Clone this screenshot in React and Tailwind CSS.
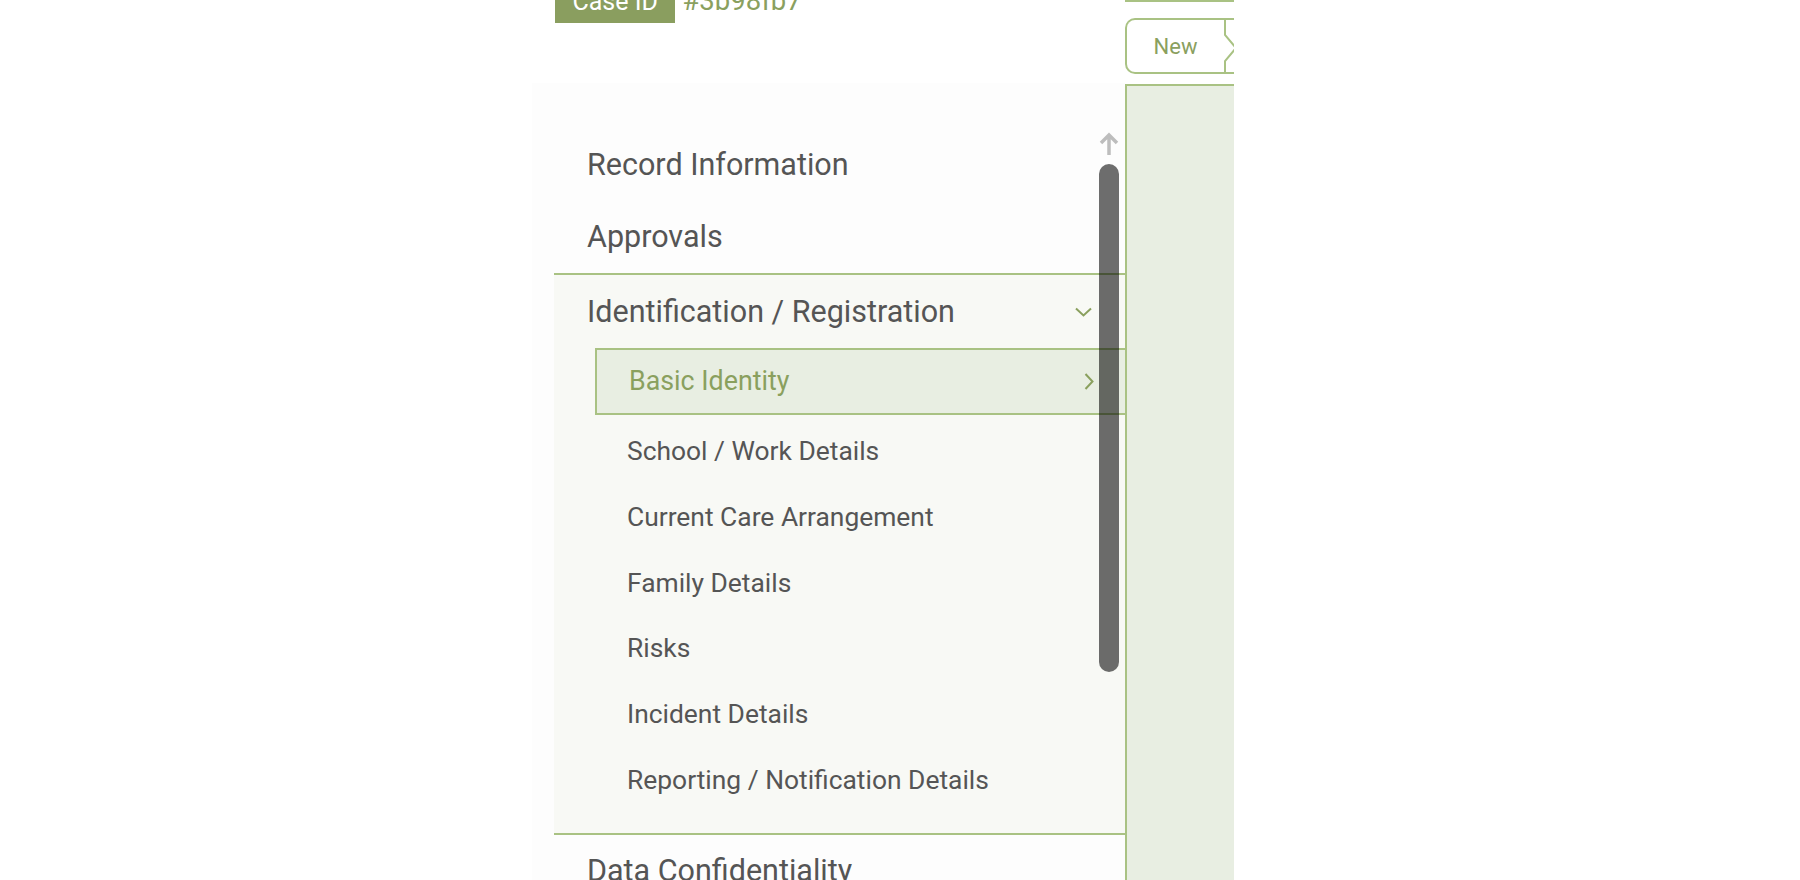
import React from "react";

const SUB_ITEMS = [
  "School / Work Details",
  "Current Care Arrangement",
  "Family Details",
  "Risks",
  "Incident Details",
  "Reporting / Notification Details",
];

function ChevronDown() {
  return (
    <svg width="17" height="10" viewBox="0 0 17 10" fill="none">
      <path d="M1 1.5 8.5 8.5 16 1.5" stroke="#8aa05e" strokeWidth="2" />
    </svg>
  );
}

function ChevronRight() {
  return (
    <svg width="10" height="17" viewBox="0 0 10 17" fill="none">
      <path d="M1.5 1 8.5 8.5 1.5 16" stroke="#8aa05e" strokeWidth="2" />
    </svg>
  );
}

export default function App() {
  return (
    <div
      className="h-[880px] w-full overflow-hidden bg-white"
      style={{ fontFamily: "Roboto, 'Noto Sans', sans-serif" }}
    >
      <div className="flex pl-[532px]">
        {/* left column: case header + form navigation */}
        <div className="w-[593px]">
          <div className="flex h-[83px] flex-col pl-[23px]">
            <div className="-mt-[14.5px] flex items-baseline gap-[7px]">
              <span className="bg-[#8a9e5f] px-[17.5px] pb-[6.5px] text-[25px] leading-[30px] text-white">
                Case ID
              </span>
              <span className="text-[27.5px] leading-[30px] text-[#8aa05e]">#3b98fb7</span>
            </div>
          </div>

          <div className="relative bg-[#fdfdfd] pl-[22px] pt-[46px]">
            <nav className="text-[#555555]">
              <div className="flex h-[72px] items-center pl-[33px] text-[30.5px]">Record Information</div>
              <div className="flex h-[72px] items-center pl-[33px] text-[30.5px]">Approvals</div>

              <div className="border-y-2 border-[#a9c283] bg-[#f8f9f5] pb-[19px]">
                <div className="flex h-[73px] items-center justify-between pl-[33px] pr-[33px] text-[30.5px]">
                  <span>Identification / Registration</span>
                  <ChevronDown />
                </div>
                <div className="ml-[41px] flex h-[67px] items-center justify-between border-2 border-r-0 border-[#a9c283] bg-[#e8eee2] pl-[32px] pr-[31px] text-[26.8px] text-[#8aa05e]">
                  <span>Basic Identity</span>
                  <ChevronRight />
                </div>
                <div className="mt-[4px]">
                  {SUB_ITEMS.map((item) => (
                    <div key={item} className="flex h-[65.8px] items-center pl-[73px] text-[26.4px]">
                      {item}
                    </div>
                  ))}
                </div>
              </div>

              <div className="flex h-[72px] items-center pl-[33px] text-[30.5px]">Data Confidentiality</div>
              <div className="flex h-[72px] items-center pl-[33px] text-[30.5px]">Family Details</div>
            </nav>

            {/* scroll indicator */}
            <svg
              className="absolute left-[567px] top-[49px]"
              width="20"
              height="24"
              viewBox="0 0 20 24"
              fill="none"
            >
              <path d="M10 23V3M2 11l8-8 8 8" stroke="#bdbdbd" strokeWidth="3.5" />
            </svg>
            <div className="absolute left-[567px] top-[81px] h-[508px] w-[20px] rounded-full bg-black/[0.57]" />
          </div>
        </div>

        {/* right column: workflow step + content */}
        <div className="w-[109px] overflow-hidden">
          <div className="border-t-2 border-[#a9c283]" />
          <div className="relative mt-[16px] flex h-[56px] items-center">
            <div className="flex h-full w-[99px] items-center justify-center rounded-l-[10px] border-2 border-r-0 border-[#a9c283] text-[22px] text-[#8aa05e]">
              New
            </div>
            <svg className="h-full w-[10px]" viewBox="0 0 10 56" fill="none">
              <path d="M0 1H10M0 55H10" stroke="#a9c283" strokeWidth="2" />
              <path d="M1 0V17L12 30L1 43V56" stroke="#a9c283" strokeWidth="2" />
            </svg>
          </div>
          <div className="mt-[10px] h-[800px] border-l-2 border-t-2 border-[#a9c283] bg-[#e8eee2]" />
        </div>
      </div>
    </div>
  );
}
